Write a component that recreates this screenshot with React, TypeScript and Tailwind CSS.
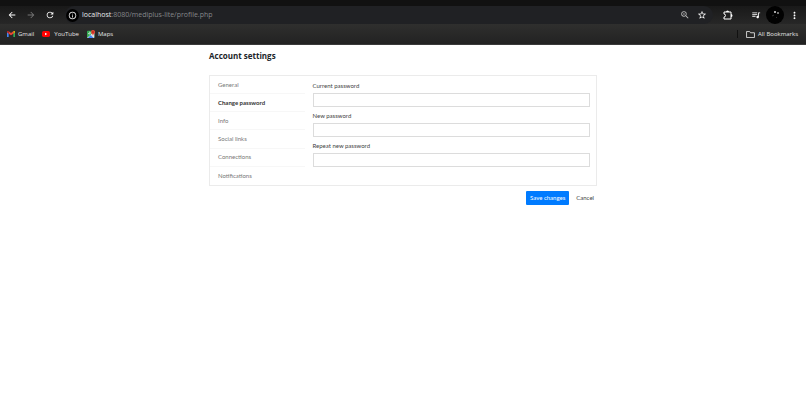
import { useState } from 'react';
import clsx from 'clsx';
import {
  MdArrowBack,
  MdArrowForward,
  MdRefresh,
  MdInfoOutline,
  MdZoomIn,
  MdStarBorder,
  MdQueueMusic,
  MdMoreVert,
} from 'react-icons/md';

const TABS = ['General', 'Change password', 'Info', 'Social links', 'Connections', 'Notifications'];

const FIELDS = [
  { id: 'current-password', label: 'Current password' },
  { id: 'new-password', label: 'New password' },
  { id: 'repeat-password', label: 'Repeat new password' },
];

function GmailIcon() {
  return (
    <svg viewBox="0 0 24 18" className="h-[6px] w-[8px]" aria-hidden="true">
      <path d="M0 2v16h5V7z" fill="#4285f4" />
      <path d="M24 2v16h-5V7z" fill="#34a853" />
      <path d="M19 1v7l5-4V2c0-2-3-3-5-1z" fill="#fbbc04" />
      <path d="M5 8V1l7 5 7-5v7l-7 5z" fill="#ea4335" />
      <path d="M0 2v2l5 4V1C3-1 0 0 0 2z" fill="#c5221f" />
    </svg>
  );
}

function YouTubeIcon() {
  return (
    <svg viewBox="0 0 24 18" className="h-[6px] w-[8px]" aria-hidden="true">
      <rect width="24" height="18" rx="5" fill="#f00" />
      <path d="M9 5v8l7-4z" fill="#fff" />
    </svg>
  );
}

function MapsIcon() {
  return (
    <svg viewBox="0 0 24 24" className="size-[8px]" aria-hidden="true">
      <rect y="2" width="22" height="22" rx="2" fill="#34a853" />
      <path d="M0 24L22 4v18a2 2 0 0 1-2 2z" fill="#dfe3e8" />
      <path d="M3 24l8-9 9 9z" fill="#4285f4" />
      <path d="M4 9a3 3 0 1 0 3-3M7 9h3" stroke="#fff" strokeWidth="2" fill="none" />
      <path d="M18 0a6 6 0 0 0-6 6c0 4 5 6 6 11 1-5 6-7 6-11a6 6 0 0 0-6-6z" fill="#ea4335" />
      <circle cx="18" cy="6" r="2" fill="#8c1a11" />
    </svg>
  );
}

function ExtensionIcon() {
  return (
    <svg viewBox="0 0 20 20" className="size-[10px]" fill="none" stroke="currentColor" strokeWidth="2" aria-hidden="true">
      <path d="M2 4h14v14H2v-4a3 3 0 0 0 0-6z" strokeLinejoin="round" />
      <path d="M6 4a3 3 0 0 1 6 0zM16 8a3 3 0 0 1 0 6z" fill="currentColor" stroke="none" />
    </svg>
  );
}

function FolderIcon() {
  return (
    <svg viewBox="0 0 20 16" className="h-[7px] w-[9px]" fill="none" stroke="currentColor" strokeWidth="2" aria-hidden="true">
      <path d="M1 1h7l2 3h9v11H1z" strokeLinejoin="round" />
    </svg>
  );
}

function Avatar() {
  return (
    <svg viewBox="0 0 18 18" className="size-[18px]" aria-hidden="true">
      <circle cx="9" cy="9" r="9" fill="#020202" />
      <circle cx="9" cy="6" r="1" fill="#ddd" />
      <circle cx="12" cy="7" r="1" fill="#999" />
      <path d="M6 10l2-1M10 11l1 1" stroke="#333" />
    </svg>
  );
}

function BrowserBar() {
  return (
    <header className="border-b border-[#3a3a3a] bg-[#1c1c1c] text-white">
      <div className="h-[6px] bg-[#111111]" />
      <div className="flex h-[18px] items-center bg-linear-to-b from-[#191919] to-[#272727] pr-[6px] pl-[7px]">
        <div className="flex items-center gap-[9px]">
          <button type="button" aria-label="Back"><MdArrowBack className="size-[10px]" /></button>
          <button type="button" aria-label="Forward" className="text-[#777]"><MdArrowForward className="size-[10px]" /></button>
          <button type="button" aria-label="Reload"><MdRefresh className="size-[10px]" /></button>
        </div>
        <div className="ml-[10px] flex h-full flex-1 items-center rounded-full bg-[#202124] pr-[6px] pl-px">
          <button type="button" aria-label="Site information" className="flex size-[13px] items-center justify-center rounded-full bg-black">
            <MdInfoOutline className="size-[9px]" />
          </button>
          <span className="ml-[3px] flex-1 text-[7px] leading-[10px] text-[#85878a]">
            <span className="text-[#e8eaed]">localhost</span>:8080/mediplus-lite/profile.php
          </span>
          <button type="button" aria-label="Zoom"><MdZoomIn className="size-[10px] text-[#bbb]" /></button>
          <button type="button" aria-label="Bookmark this page" className="ml-[7px]"><MdStarBorder className="size-[10px]" /></button>
        </div>
        <button type="button" aria-label="Extensions" className="ml-[10px]"><ExtensionIcon /></button>
        <button type="button" aria-label="Media" className="ml-[18px]"><MdQueueMusic className="size-[10px]" /></button>
        <button type="button" aria-label="Profile" className="ml-[5px]"><Avatar /></button>
        <button type="button" aria-label="Menu" className="ml-[5px]"><MdMoreVert className="size-[11px]" /></button>
      </div>
      <nav aria-label="Bookmarks" className="flex h-[20px] items-center bg-linear-to-b from-[#2f2f2e] to-[#222222] pr-2 pl-[7px] text-[6px] leading-[8px] text-[#e3e3e3]">
        <a href="#gmail" className="flex items-center gap-[3px]"><GmailIcon />Gmail</a>
        <a href="#youtube" className="ml-2 flex items-center gap-[4px]"><YouTubeIcon />YouTube</a>
        <a href="#maps" className="ml-2 flex items-center gap-[3px]"><MapsIcon />Maps</a>
        <span className="mr-2 ml-auto h-2 w-px bg-[#111]" />
        <button type="button" className="flex items-center gap-[3px]">
          <FolderIcon />
          All Bookmarks
        </button>
      </nav>
    </header>
  );
}

export default function App() {
  const [active, setActive] = useState('Change password');

  return (
    <div className="min-h-screen bg-white font-['Open_Sans',sans-serif]">
      <BrowserBar />
      <main className="mx-auto w-full max-w-[388px] pt-[5px]">
        <h4 className="text-[8px] leading-[12px] font-bold text-[#212529]">Account settings</h4>

        <div className="mt-[13px] grid grid-cols-4 border border-[#ebebeb] font-['Lato',sans-serif]">
          <nav aria-label="Settings" className="mr-[2px] grid grid-rows-6 divide-y divide-[#f7f7f7]">
            {TABS.map((tab) => (
              <a
                key={tab}
                href="#settings"
                onClick={() => setActive(tab)}
                className={clsx(
                  'flex items-center pl-2 text-[6px] leading-[8px]',
                  tab === active ? 'font-bold text-[#333]' : 'text-[#777]',
                )}
              >
                {tab}
              </a>
            ))}
          </nav>

          <form id="password-form" onSubmit={(e) => e.preventDefault()} className="col-span-3 flex flex-col gap-[5px] px-[6px] pt-[6px] pb-[18px]">
            {FIELDS.map((field) => (
              <div key={field.id}>
                <label htmlFor={field.id} className="mb-[3px] block text-[6px] leading-[8px] text-[#444]">
                  {field.label}
                </label>
                <input
                  id={field.id}
                  type="password"
                  className="block h-[14px] w-full border border-[#dcdcdc] bg-white px-1 text-[6px] outline-none focus:border-[#80bdff]"
                />
              </div>
            ))}
          </form>
        </div>

        <div className="mt-[5px] flex justify-end gap-[4px] font-['Lato',sans-serif] text-[6px] leading-[8px]">
          <button type="submit" form="password-form" className="h-[14px] rounded-[1px] bg-[#007bff] px-[4px] text-white">
            Save changes
          </button>
          <button type="button" className="h-[14px] px-[3px] text-[#444]">Cancel</button>
        </div>
      </main>
    </div>
  );
}
